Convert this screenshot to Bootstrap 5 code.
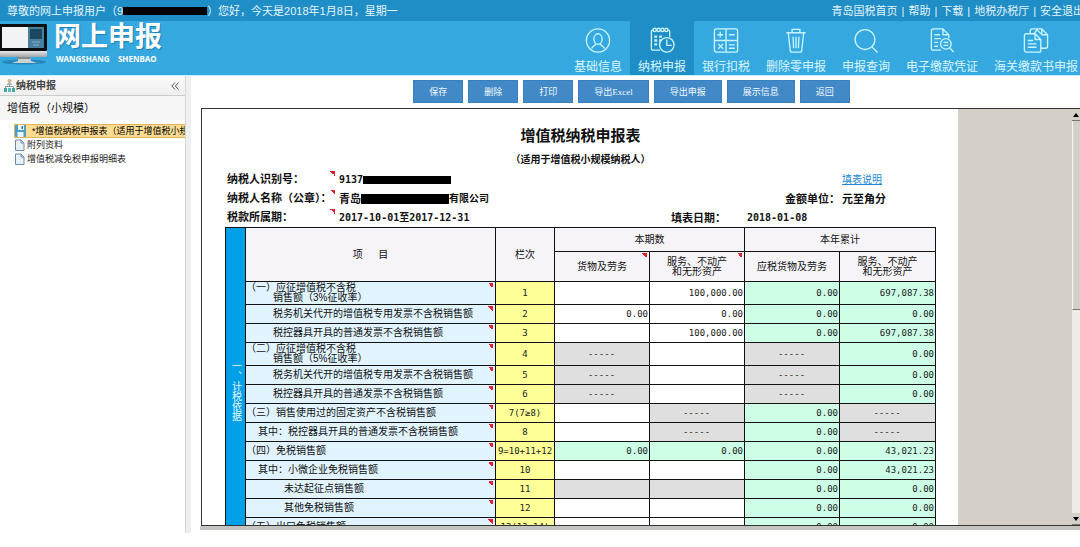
<!DOCTYPE html>
<html lang="zh-CN">
<head>
<meta charset="utf-8">
<meta name="viewport" content="width=device-width, initial-scale=1">
<title>网上申报</title>
<link rel="stylesheet" href="https://cdn.jsdelivr.net/npm/bootstrap@5.3.0/dist/css/bootstrap.min.css">
<style>
  body { font-family: "Liberation Sans", "Noto Sans CJK SC", sans-serif; font-size: 11px; line-height: 14px; color: #111; background: #fff; }
  a { text-decoration: none; }
  .topbar { background: #1f8dc6; color: #e4f5fd; height: 21px; padding-left: 7px; }
  .topbar a { color: inherit; }
  .toplinks { gap: 4px; margin-right: -4px; }
  .redact { display: inline-block; background: #000; flex: none; }
  .masthead { background: #36a8e0; height: 55px; border-bottom: 1px solid #c4efff; }
  .brand-block { margin-left: 6px; }
  .brand-name { font-size: 27px; line-height: 32px; font-weight: 700; color: #fff; text-shadow: 1px 1px 1px #1c7fb5; }
  .brand-sub { font-family: "Noto Sans", sans-serif; font-size: 8px; line-height: 12px; font-weight: 700; color: #fff; padding-left: 2px; white-space: pre; }
  .mainnav { margin-right: -6px; }
  .mainnav a { color: #d8f6ff; font-size: 12px; line-height: 16px; padding: 6px 8px 0; gap: 5px; }
  .mainnav a.active { background: #1f8dc6; }
  .mainnav svg { width: 26px; height: 28px; fill: none; stroke: #c8f5ff; stroke-width: 1.4; }
  .side { width: 185px; flex: none; }
  .side-head { height: 20px; padding: 0 6px 0 3px; font-size: 10px; color: #444; background: linear-gradient(#fafafa, #efefef); border-bottom: 1px solid #ccc; }
  .side-title { height: 24px; padding-left: 7px; background: #f5f5f6; }
  .tree { font-size: 9px; color: #222; padding: 4px 0 0 14px; margin: 0; list-style: none; }
  .tree a { color: inherit; height: 14px; line-height: 12px; gap: 2px; white-space: nowrap; overflow: hidden; }
  .tree .chosen { background: #fcdc93; border: 1px solid #e3b55a; border-right: 0; gap: 6px; color: #000; }
  .tree svg { width: 11px; height: 12px; flex: none; }
  .splitter { width: 6px; flex: none; background: #efeff1; border-left: 1px solid #d8d8da; }
  .toolbar { height: 32px; gap: 5px; padding-top: 4px; }
  .tool { font-family: "Liberation Serif", "Noto Sans CJK SC", serif; font-size: 9px; line-height: 12px; height: 23px; padding: 0 15px; border: 1px solid #3a7fbd; border-radius: 0; color: #f2f9ff; background: #4189c7; }
  .tool:hover { background: #2f74b0; color: #fff; }
  .work { padding-bottom: 14px; }
  .pane { padding-bottom: 3px; }
  .viewer { margin-left: 10px; border: 1px solid #333; border-right: 0; }
  .shadow-strip { height: 4px; margin-left: 9px; background: #c4c4c0; }
  .sheet { padding: 16px 22px 0 23px; font-size: 10px; line-height: 10px; }
  .sheet h1 { font-size: 15px; line-height: 22px; margin: 0 0 3px; font-weight: 700; }
  .sheet h2 { font-size: 10px; line-height: 19px; margin: 0 0 1px; font-weight: 700; }
  .meta { height: 19px; padding-left: 2px; font-weight: 700; font-size: 11px; }
  .meta .fig { font-family: "DejaVu Sans Mono", "Noto Sans CJK SC", monospace; font-size: 10px; }
  .meta-label { width: 112px; }
  .meta-last { width: 94px; }
  .meta-tail { font-size: 10px; }
  .meta-help { font-size: 10px; font-weight: 400; color: #1c86d1; }
  .meta-unit { width: 57px; white-space: nowrap; }
  .meta-date { width: 76px; }
  .meta-day { width: 189px; }
  .flag { background-image: linear-gradient(to top right, transparent 50%, #e0202c 50%); background-size: 5px 5px; background-repeat: no-repeat; background-position: right 2px top 1px; }
  .meta .flag { align-self: stretch; line-height: 19px; background-position: right 4px top 1px; }
  .report { width: 100%; table-layout: fixed; border-collapse: collapse; }
  .report th, .report td { border: 1px solid #111; padding: 0; font-weight: 400; vertical-align: middle; }
  .report .heads th { background-color: #f6f4f8; text-align: center; }
  .report .h1st { height: 24px; }
  .report .h2nd { height: 30px; }
  .report .r19 { height: 19px; }
  .report .r23 { height: 23px; }
  .report th { background-color: #e0f3fe; text-align: left; white-space: nowrap; overflow: hidden; }
  .report td { font-family: "DejaVu Sans Mono", "Noto Sans CJK SC", monospace; font-size: 9px; text-align: right; padding-right: 1px; color: #222; white-space: nowrap; }
  .report td.no { background: #ffff98; text-align: center; padding: 0; }
  .report td.sum { background: #ccffe6; }
  .report td.off { background: #e0dfe0; text-align: center; }
  .report .heads th.group { background: #00a0e9; color: #e8faff; padding-top: 20px; }
  .group span { writing-mode: vertical-rl; line-height: 12px; }
  .report .in1 { padding-left: 12px; }
  .report .in2 { padding-left: 27px; }
  .report .in3 { padding-left: 38px; }
  .hang { display: block; padding-left: 27px; }
  .void { width: 114px; flex: none; background: #d4d0c8; }
  .rail { width: 8px; flex: none; background: #ecebe6; }
  .rail-thumb { height: 189px; background: #d4d0c8; border-left: 1px solid #f6f5f2; border-bottom: 1px solid #777; }
  .rail-btn { height: 12px; padding: 0; border: 0; border-bottom: 1px solid #777; background: #d4d0c8; display: flex; align-items: center; justify-content: center; }
</style>
<script src="https://cdn.jsdelivr.net/npm/bootstrap@5.3.0/dist/js/bootstrap.bundle.min.js"></script>
</head>
<body class="vh-100 d-flex flex-column overflow-hidden">

<div class="topbar d-flex align-items-center text-nowrap overflow-hidden flex-shrink-0">
  <span>尊敬的网上申报用户（9</span><span class="redact" style="width:84px;height:8px"></span><span>）您好，今天是2018年1月8日，星期一</span>
  <nav class="toplinks d-flex ms-auto">
    <a href="#">青岛国税首页</a><span>|</span><a href="#">帮助</a><span>|</span><a href="#">下载</a><span>|</span><a href="#">地税办税厅</a><span>|</span><a href="#">安全退出</a>
  </nav>
</div>

<header class="masthead d-flex overflow-hidden flex-shrink-0 text-nowrap">
  <svg width="48" height="44" viewBox="0 0 48 44" aria-hidden="true">
    <defs><linearGradient id="metal" x1="0" y1="0" x2="0" y2="1"><stop offset="0" stop-color="#f2f2f2"/><stop offset="1" stop-color="#9fa5a9"/></linearGradient></defs>
    <ellipse cx="24" cy="41" rx="22" ry="2.500" fill="#2787b8"/>
    <rect x="0" y="29" width="47" height="7" rx="1" fill="url(#metal)"/>
    <path d="M18 36h12l1 4 6 2H12l6-2z" fill="#cfd2d4"/>
    <path d="M18 36h12v2H18z" fill="#85898c"/>
    <rect x="-1" y="3" width="48" height="27" rx="1" fill="#0b0f12"/>
    <rect x="2" y="6" width="26" height="21" fill="#f1f3f4"/>
    <rect x="28" y="6" width="16" height="21" fill="#487f9c"/>
    <rect x="30" y="8" width="12" height="10" fill="#1d475f"/>
    <path d="M32 21h8M33 24h6" stroke="#7fb2ca"/>
  </svg>
  <div class="brand-block">
    <div class="brand-name">网上申报</div>
    <div class="brand-sub">WANGSHANG    SHENBAO</div>
  </div>
  <nav class="mainnav d-flex ms-auto">
    <a class="d-flex flex-column align-items-center" href="#">
      <svg viewBox="0 0 26 28"><circle cx="13" cy="14" r="12"/><ellipse cx="13" cy="12.500" rx="4.300" ry="5.500"/><path d="M10.500 17.500c0 2-3.500 2-4 5M15.500 17.500c0 2 3.500 2 4 5"/></svg>基础信息</a>
    <a class="active d-flex flex-column align-items-center" href="#" aria-current="page">
      <svg viewBox="0 0 26 28"><path d="M11 24H4a2 2 0 0 1-2-2V5a2 2 0 0 1 2-2h15a2 2 0 0 1 2 2v5"/><g fill="#1f8dc6"><circle cx="5.500" cy="3" r="1.700"/><circle cx="9.500" cy="3" r="1.700"/><circle cx="13.500" cy="3" r="1.700"/><circle cx="17.500" cy="3" r="1.700"/></g><path d="M5 10h3M10 10h3M5 14h3M10 14h2M5 18h3" stroke-width="2.400"/><circle cx="18" cy="18.500" r="7.500"/><path d="M18 13v6h5"/></svg>纳税申报</a>
    <a class="d-flex flex-column align-items-center" href="#">
      <svg viewBox="0 0 26 28"><rect x="1" y="2" width="24" height="24" rx="2"/><path d="M13 2v24M1 14h24M4 8h6M7 5v6M16 8h6M5 17.500l5 5M10 17.500l-5 5M16 18.500h6M16 22h6"/></svg>银行扣税</a>
    <a class="d-flex flex-column align-items-center" href="#">
      <svg viewBox="0 0 26 28"><path d="M3 6h20M9 6V2.500h8V6M5 6l2 18a2 2 0 0 0 2 2h8a2 2 0 0 0 2-2l2-18M10 10l.5 12M13 10v12M16 10l-.5 12"/></svg>删除零申报</a>
    <a class="d-flex flex-column align-items-center" href="#">
      <svg viewBox="0 0 26 28"><circle cx="12" cy="13" r="10.300"/><path d="M19 20.500l6 6"/></svg>申报查询</a>
    <a class="d-flex flex-column align-items-center" href="#">
      <svg viewBox="0 0 26 28"><path d="M12 24H4a2 2 0 0 1-2-2V4a2 2 0 0 1 2-2h10l6 6v4M14 2v6h6M5 8h6M5 12h7M5 16h4M5 20h4"/><circle cx="17" cy="17.500" r="5.500"/><path d="M21 21.500l4 4.500M14.500 16h5M14.500 19h5"/></svg>电子缴款凭证</a>
    <a class="d-flex flex-column align-items-center" href="#">
      <svg viewBox="0 0 26 28"><path d="M3 7h9l6 6v11a2 2 0 0 1-2 2H3a2 2 0 0 1-2-2V9a2 2 0 0 1 2-2zM12 7v6h6M4.500 14H10M4.500 17.500h9M4.500 21h9M7 7V4a2 2 0 0 1 2-2h10l6 6v12a2 2 0 0 1-2 2h-5M11 7l3-4 4 4M19 2v6h6"/></svg>海关缴款书申报</a>
  </nav>
</header>

<div class="d-flex flex-fill overflow-hidden work">
  <aside class="side">
    <div class="side-head d-flex align-items-center">
      <svg width="13" height="13" viewBox="0 0 13 13" aria-hidden="true"><path d="M6.500 5v3M2.500 10V7.500h8V10" fill="none" stroke="#8a9aa5"/><circle cx="6.500" cy="2" r="2" fill="#d8b48a"/><path d="M4 6c0-3 5-3 5 0z" fill="#9fb3c2"/><rect x="1" y="9" width="3" height="4" fill="#4aa79c"/><rect x="5" y="9" width="3" height="4" fill="#63b5c9"/><rect x="9" y="9" width="3" height="4" fill="#4aa79c"/></svg>
      <strong>纳税申报</strong>
      <svg class="ms-auto" width="8" height="8" viewBox="0 0 8 8" fill="none" stroke="#555" aria-hidden="true"><path d="M4 .5L.8 4 4 7.500M7.500 .5L4.300 4l3.200 3.500"/></svg>
    </div>
    <div class="side-title d-flex align-items-center">增值税（小规模）</div>
    <ul class="tree">
      <li><a class="chosen d-flex align-items-center" href="#"><svg viewBox="0 0 11 12"><rect width="11" height="12" rx="1" fill="#4a9fc9"/><path d="M3 0h6v5H3zM2.500 7h6v5h-6z" fill="#e9f6fc"/><path d="M6.500 1h1.500v3H6.500z" fill="#2f7ba3"/></svg>*增值税纳税申报表（适用于增值税小规模纳税人）</a></li>
      <li><a class="d-flex align-items-center" href="#"><svg viewBox="0 0 11 12"><path d="M1.500 1h5.500l3 3v7.500H1.500z" fill="#e8f1f8" stroke="#6d8bab"/><path d="M7 1v3h3" fill="none" stroke="#6d8bab"/></svg>附列资料</a></li>
      <li><a class="d-flex align-items-center" href="#"><svg viewBox="0 0 11 12"><path d="M1.500 1h5.500l3 3v7.500H1.500z" fill="#e8f1f8" stroke="#6d8bab"/><path d="M7 1v3h3" fill="none" stroke="#6d8bab"/></svg>增值税减免税申报明细表</a></li>
    </ul>
  </aside>
  <div class="splitter"></div>

  <main class="pane d-flex flex-column flex-fill overflow-hidden">
    <div class="toolbar d-flex justify-content-center align-items-start pe-2 flex-shrink-0">
      <button type="button" class="btn tool">保存</button>
      <button type="button" class="btn tool">删除</button>
      <button type="button" class="btn tool">打印</button>
      <button type="button" class="btn tool">导出Excel</button>
      <button type="button" class="btn tool">导出申报</button>
      <button type="button" class="btn tool">展示信息</button>
      <button type="button" class="btn tool">返回</button>
    </div>
    <div class="viewer d-flex flex-fill overflow-hidden">
      <div class="sheet flex-fill overflow-hidden">
        <h1 class="text-center">增值税纳税申报表</h1>
        <h2 class="text-center">（适用于增值税小规模纳税人）</h2>
        <div class="meta d-flex align-items-center">
          <span class="meta-label flag">纳税人识别号：</span><span class="fig">9137</span><span class="redact" style="width:88px;height:8px"></span>
          <a class="meta-last meta-help ms-auto text-decoration-underline" href="#">填表说明</a>
        </div>
        <div class="meta d-flex align-items-center">
          <span class="meta-label flag">纳税人名称（公章）：</span><span>青岛</span><span class="redact" style="width:88px;height:10px"></span><span class="meta-tail">有限公司</span>
          <span class="meta-unit ms-auto">金额单位：</span><span class="meta-last">元至角分</span>
        </div>
        <div class="meta d-flex align-items-center">
          <span class="meta-label flag">税款所属期：</span><span class="fig">2017-10-01至2017-12-31</span>
          <span class="meta-date ms-auto">填表日期：</span><span class="meta-day fig">2018-01-08</span>
        </div>
        <table class="report">
          <colgroup><col style="width:20px"><col><col style="width:59px"><col style="width:95px"><col style="width:95px"><col style="width:95px"><col style="width:96px"></colgroup>
          <tbody>
            <tr class="heads h1st"><th class="group" rowspan="15"><span>一、计税依据</span></th><th rowspan="2">项&emsp;&nbsp;&nbsp;目</th><th rowspan="2">栏次</th><th colspan="2">本期数</th><th colspan="2">本年累计</th></tr>
            <tr class="heads h2nd"><th class="flag">货物及劳务</th><th class="flag">服务、不动产<br>和无形资产</th><th>应税货物及劳务</th><th>服务、不动产<br>和无形资产</th></tr>
            <tr class="r23"><th class="flag">（一）应征增值税不含税<span class="hang">销售额（3%征收率）</span></th><td class="no">1</td><td></td><td>100,000.00</td><td class="sum">0.00</td><td class="sum">697,087.38</td></tr>
            <tr class="r19"><th class="flag in2">税务机关代开的增值税专用发票不含税销售额</th><td class="no">2</td><td>0.00</td><td>0.00</td><td class="sum">0.00</td><td class="sum">0.00</td></tr>
            <tr class="r19"><th class="flag in2">税控器具开具的普通发票不含税销售额</th><td class="no">3</td><td></td><td>100,000.00</td><td class="sum">0.00</td><td class="sum">697,087.38</td></tr>
            <tr class="r23"><th class="flag">（二）应征增值税不含税<span class="hang">销售额（5%征收率）</span></th><td class="no">4</td><td class="off">-----</td><td></td><td class="off">-----</td><td class="sum">0.00</td></tr>
            <tr class="r19"><th class="flag in2">税务机关代开的增值税专用发票不含税销售额</th><td class="no">5</td><td class="off">-----</td><td></td><td class="off">-----</td><td class="sum">0.00</td></tr>
            <tr class="r19"><th class="flag in2">税控器具开具的普通发票不含税销售额</th><td class="no">6</td><td class="off">-----</td><td></td><td class="off">-----</td><td class="sum">0.00</td></tr>
            <tr class="r19"><th class="flag">（三）销售使用过的固定资产不含税销售额</th><td class="no">7(7≥8)</td><td></td><td class="off">-----</td><td class="sum">0.00</td><td class="off">-----</td></tr>
            <tr class="r19"><th class="flag in1">其中：税控器具开具的普通发票不含税销售额</th><td class="no">8</td><td></td><td class="off">-----</td><td class="sum">0.00</td><td class="off">-----</td></tr>
            <tr class="r19"><th class="flag">（四）免税销售额</th><td class="no">9=10+11+12</td><td class="sum">0.00</td><td class="sum">0.00</td><td class="sum">0.00</td><td class="sum">43,021.23</td></tr>
            <tr class="r19"><th class="flag in1">其中：小微企业免税销售额</th><td class="no">10</td><td></td><td></td><td class="sum">0.00</td><td class="sum">43,021.23</td></tr>
            <tr class="r19"><th class="flag in3">未达起征点销售额</th><td class="no">11</td><td class="off"></td><td class="off"></td><td class="sum">0.00</td><td class="sum">0.00</td></tr>
            <tr class="r19"><th class="flag in3">其他免税销售额</th><td class="no">12</td><td></td><td></td><td class="sum">0.00</td><td class="sum">0.00</td></tr>
            <tr class="r19"><th class="flag">（五）出口免税销售额</th><td class="no">13(13≥14)</td><td></td><td></td><td class="sum">0.00</td><td class="sum">0.00</td></tr>
          </tbody>
        </table>
      </div>
      <div class="void"></div>
      <div class="rail d-flex flex-column">
        <button type="button" class="rail-btn" aria-label="向上滚动"><svg width="6" height="4" viewBox="0 0 6 4"><path d="M0 4l3-4 3 4z"/></svg></button>
        <div class="rail-thumb"></div>
        <button type="button" class="rail-btn mt-auto" aria-label="向下滚动"><svg width="6" height="4" viewBox="0 0 6 4"><path d="M0 0l3 4 3-4z"/></svg></button>
      </div>
    </div>
    <div class="shadow-strip flex-shrink-0"></div>
  </main>
</div>
</body>
</html>
